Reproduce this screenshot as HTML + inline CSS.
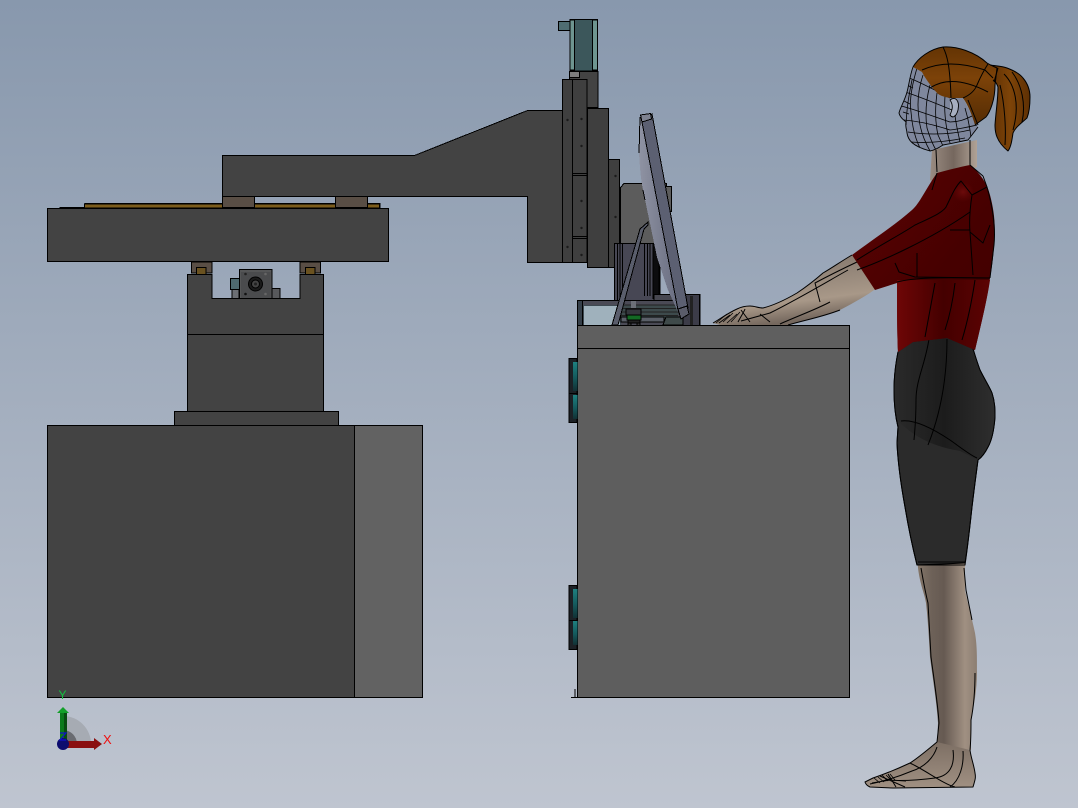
<!DOCTYPE html>
<html><head><meta charset="utf-8"><style>
html,body{margin:0;padding:0;width:1078px;height:808px;overflow:hidden;background:#a0abbb}
svg{display:block}
</style></head><body>
<svg width="1078" height="808" viewBox="0 0 1078 808" xmlns="http://www.w3.org/2000/svg" font-family="Liberation Sans, sans-serif">
<defs>
<linearGradient id="bg" x1="0" y1="0" x2="0" y2="1"><stop offset="0" stop-color="#8898ad"/><stop offset="1" stop-color="#bfc5d0"/></linearGradient>
<linearGradient id="mon" x1="0" y1="0" x2="1" y2="0"><stop offset="0" stop-color="#8f93a3"/><stop offset=".5" stop-color="#777b8d"/><stop offset="1" stop-color="#62667a"/></linearGradient>
<linearGradient id="teal" x1="0" y1="0" x2="0" y2="1"><stop offset="0" stop-color="#1e8080"/><stop offset=".55" stop-color="#14595c"/><stop offset="1" stop-color="#123034"/></linearGradient>
<linearGradient id="hair" x1="0" y1="0" x2="0" y2="1"><stop offset="0" stop-color="#643404"/><stop offset=".4" stop-color="#7c4208"/><stop offset="1" stop-color="#542c04"/></linearGradient>
<linearGradient id="tail" x1="0" y1="0" x2="1" y2="0"><stop offset="0" stop-color="#5e3004"/><stop offset=".5" stop-color="#7e4408"/><stop offset="1" stop-color="#5e3004"/></linearGradient>
<linearGradient id="red" x1="0" y1="0" x2="1" y2="1"><stop offset="0" stop-color="#5c0303"/><stop offset=".6" stop-color="#460000"/><stop offset="1" stop-color="#420000"/></linearGradient>
<linearGradient id="redT" x1="0" y1="0" x2="1" y2="0"><stop offset="0" stop-color="#6e0606"/><stop offset=".5" stop-color="#440000"/><stop offset="1" stop-color="#5c0303"/></linearGradient>
<linearGradient id="short" x1="0" y1="0" x2="1" y2="0"><stop offset="0" stop-color="#2a2a2a"/><stop offset=".5" stop-color="#1c1c1c"/><stop offset="1" stop-color="#2e2e2e"/></linearGradient>
<linearGradient id="leg" x1="0" y1="0" x2="1" y2="0"><stop offset="0" stop-color="#857769"/><stop offset=".25" stop-color="#6d6158"/><stop offset=".45" stop-color="#665a52"/><stop offset=".8" stop-color="#a09082"/><stop offset="1" stop-color="#8c7e72"/></linearGradient>
<linearGradient id="arm" x1="0" y1="0" x2="0.3" y2="1"><stop offset="0" stop-color="#7c6f65"/><stop offset=".45" stop-color="#95877a"/><stop offset=".75" stop-color="#a89888"/><stop offset="1" stop-color="#75685e"/></linearGradient>
<linearGradient id="neck" x1="0" y1="0" x2="1" y2="0"><stop offset="0" stop-color="#9a8c82"/><stop offset=".5" stop-color="#75675e"/><stop offset="1" stop-color="#b0a296"/></linearGradient>
<linearGradient id="foot" x1="0" y1="0" x2="0" y2="1"><stop offset="0" stop-color="#7d6f64"/><stop offset="1" stop-color="#a09082"/></linearGradient>
<radialGradient id="sh" cx=".5" cy=".5" r=".5"><stop offset="0" stop-color="#7a1010" stop-opacity=".7"/><stop offset="1" stop-color="#6a0505" stop-opacity="0"/></radialGradient>
<clipPath id="faceC"><path d="M913 67C910 75 909 85 907 92C905 100 900 108 899 113C900 118 904 120 906 122C905 127 907 130 907 133C908 140 912 146 930 151C936 150 940 147 943 145C955 143 962 141 968 140C972 135 975 131 978 127L963 98L937 93L922 72Z"/></clipPath>
</defs>
<rect width="1078" height="808" fill="url(#bg)"/>

<g stroke="#000" stroke-width="1" stroke-linejoin="miter" shape-rendering="crispEdges">
<rect x="47.500" y="425.500" width="307" height="272" fill="#434343"/>
<rect x="354.500" y="425.500" width="68" height="272" fill="#626262"/>
<rect x="174.500" y="411.500" width="164" height="14" fill="#434343"/>
<rect x="187.500" y="334.500" width="136" height="77" fill="#434343"/>
<rect x="191.500" y="262" width="20.500" height="11" fill="#594e45"/>
<rect x="300" y="262" width="20.500" height="11" fill="#594e45"/>
<path d="M187.500 334.500V274.500H212V298.500H300V274.500H323.500V334.500Z" fill="#434343"/>
<rect x="196.500" y="267.500" width="9.500" height="7" fill="#6a5220"/>
<rect x="305.500" y="267.500" width="9.500" height="7" fill="#6a5220"/>
<rect x="230.500" y="278.500" width="9" height="11" fill="#4f6a70"/>
<rect x="232" y="289.500" width="7" height="9" fill="#6c6f74"/>
<rect x="272" y="288.500" width="8" height="10" fill="#58595c"/>
<rect x="239.500" y="269.500" width="32.500" height="29" fill="#555657"/>
<rect x="241" y="272" width="29.500" height="26" fill="#4a4b4d" stroke="none"/>
</g>
<circle cx="255.500" cy="284" r="7" fill="#1a1a1a" stroke="#000"/>
<circle cx="255.500" cy="284" r="4" fill="#444" stroke="#000"/>
<circle cx="255.500" cy="284" r="1.500" fill="#222"/>
<circle cx="245.500" cy="274" r="1.300" fill="#222"/><circle cx="265.500" cy="274" r="1.300" fill="#666"/>
<circle cx="245.500" cy="294" r="1.300" fill="#111"/><circle cx="265.500" cy="294" r="1.300" fill="#666"/>
<g stroke="#000" stroke-width="1" shape-rendering="crispEdges">
<path d="M60 207.500H85V203.500H380V208H60Z" fill="#4b4b4b"/>
<rect x="84.500" y="204" width="295" height="4" fill="#7c5d1d"/>
<rect x="47.500" y="208.500" width="341" height="53" fill="#434343"/>
<rect x="222.500" y="196.500" width="32" height="11" fill="#594e45"/>
<rect x="335.500" y="196.500" width="32" height="11" fill="#594e45"/>
<path d="M222.500 155.500H414.500L527.500 110.500H563V262.500H527.500V196.500H222.500Z" fill="#434343"/>
<rect x="569.500" y="71.500" width="28.500" height="36" fill="#434343"/>
<rect x="569.500" y="71.500" width="10" height="6" fill="#7d7d7d"/>
<rect x="562.500" y="79.500" width="10" height="183" fill="#3f3f3f"/>
<rect x="572.500" y="79.500" width="14.500" height="183" fill="#3f3f3f"/>
<path d="M572.500 173.500H587M572.500 175.500H587M572.500 236.500H587M572.500 238.500H587" fill="none"/>
<rect x="608.500" y="159.500" width="11" height="108" fill="#3f3f3f"/>
<rect x="587.500" y="108.500" width="21" height="159" fill="#3f3f3f"/>
<rect x="558.500" y="21.500" width="12" height="9" fill="#4f6c72"/>
<rect x="570" y="19.500" width="27.500" height="51.500" fill="#3c575b"/>
<rect x="570" y="20" width="4.500" height="50" fill="#6e9590"/>
<rect x="592.500" y="20" width="5" height="50" fill="#6e9590"/>
<path d="M620.500 187.500L624 183.500H666.500V186.500H671.500V211.500H660V300H620.500Z" fill="#5c5c5c"/>
<rect x="614.500" y="243.500" width="43" height="57" fill="#474754"/>
<path d="M617.500 243.500V300M620 243.500V300M622.500 243.500V300M644.500 243.500V296M647.500 243.500V296M650 243.500V296" fill="none"/>
<rect x="653" y="243.500" width="6" height="55" fill="#0c0c0e"/>
<rect x="654" y="294.500" width="46" height="31" fill="#474750"/>
<rect x="577.500" y="300.500" width="100" height="25" fill="#4a4a55"/>
<rect x="583.500" y="305.500" width="37" height="20" fill="#9fb1bc" stroke="#3e4a52"/>
<rect x="577.500" y="300.500" width="5" height="25" fill="#36404a"/>
<rect x="620" y="305" width="58" height="14" fill="#3d4a4c" stroke="none"/>
<path d="M620 305H676M620 308.500H676M620 312H678M620 315.500H678" fill="none" stroke="#222"/>
<rect x="682" y="294.500" width="17.500" height="31" fill="#3c3c48"/>
<rect x="690" y="296" width="3" height="29" fill="#222" stroke="none"/>
<rect x="621" y="317" width="43" height="5" fill="#5a5f68"/>
<path d="M663 325L666 317H683V325Z" fill="#3f4a4a"/>
<rect x="631" y="301" width="5" height="7" fill="#6c7078" stroke="none"/>
<rect x="626" y="309" width="15" height="6" fill="#33363b"/>
<rect x="627" y="315" width="14" height="5" fill="#136a24"/>
<rect x="628" y="320" width="12" height="3" fill="#222"/>
<rect x="628" y="323" width="3" height="3" fill="#3a3a3a"/><rect x="637" y="323" width="3" height="3" fill="#3a3a3a"/>
<path d="M612 325L640 229L648 222L648 225L644 229L618 325Z" fill="#5a5e6c"/>
<path d="M640 117L639 153C640 170 641 180 643 190L657 257L668 290L678 312L688 308L652 114Z" fill="url(#mon)" stroke="none"/>
<path d="M640 117L639 153M643 190L645 200M652 114L688 308L678 312" fill="none"/>
<path d="M642 122L652 114L688 308L678 310Z" fill="#5c6072"/>
<path d="M640.500 115L650.500 113.500L651.500 119L642 122Z" fill="#7e8290"/>
<path d="M678 309L687 306L689 314L681 319Z" fill="#5a5c6a"/>
<rect x="577.500" y="348.500" width="272" height="349" fill="#5e5e5e"/>
<rect x="577.500" y="325.500" width="272" height="23" fill="#5f5f5f"/>
<path d="M569 358.500H577V422.500H569Z" fill="#1c2126"/>
<rect x="573" y="362" width="4.500" height="29" fill="url(#teal)" stroke="none"/>
<rect x="573" y="395" width="4.500" height="24" fill="url(#teal)" stroke="none"/>
<path d="M569 393.500H577" fill="none"/>
<path d="M569 585.500H577V649.500H569Z" fill="#1c2126"/>
<rect x="573" y="589" width="4.500" height="29" fill="url(#teal)" stroke="none"/>
<rect x="573" y="621" width="4.500" height="24" fill="url(#teal)" stroke="none"/>
<path d="M569 620.500H577" fill="none"/>
<path d="M571 697.500H578M575 697V689" fill="none"/>
</g>
<g fill="#1a1a1a">
<circle cx="567.500" cy="120" r="1.200"/><circle cx="581.500" cy="119" r="1.200"/><circle cx="581.500" cy="146" r="1.200"/><circle cx="581.500" cy="201" r="1.200"/><circle cx="581.500" cy="228" r="1.200"/><circle cx="581.500" cy="255" r="1.200"/><circle cx="567.500" cy="247" r="1.200"/><circle cx="615.500" cy="176" r="1.200"/><circle cx="615.500" cy="217" r="1.200"/>
</g>

<g stroke-linejoin="round">
<path d="M917 556L918 568C920 585 925 595 926 603C928 620 929 640 930 657C933 680 937 705 938 723L937 745L971 750C971 740 971 730 971 720C974 705 977 690 977 673C977 655 977 645 975 633C972 618 968 605 965 590L965 567L966 556Z" fill="url(#leg)"/>
<path d="M937 742C925 752 918 758 910 763C895 770 885 774 873 778L865 782C866 785 868 786 870 787L893 788L973 787C975 780 976 778 975 773C974 765 971 758 970 750Z" fill="url(#foot)"/>
<g fill="none" stroke="#000" stroke-width="1">
<path d="M921 568C924 585 926 595 928 603C929 620 930 640 931 657C934 680 938 705 939 723L937 742C925 752 918 758 910 763C895 770 885 774 873 778L865 782C866 785 868 786 870 787L893 788L973 787C975 780 976 778 975 773C974 765 971 758 970 750C971 740 971 730 971 720C974 705 975 690 975 673M964 568L966 590C968 600 970 610 972 620"/>
<path d="M937 747C934 757 925 767 912 771C900 776 885 781 870 784M953 750C955 765 950 776 935 778C920 780 900 781 885 780M963 751C964 765 960 780 950 787M910 763C925 770 945 785 955 787M880 776L905 787M888 774L896 787M872 783L890 780L906 781"/>
<path d="M874 778L880 783M878 777L884 782M882 775L888 781M886 775L891 780M890 774L895 780" stroke-width=".8"/>
</g>
<path d="M898 352C903 347 908 344 913 342C925 339 935 338 947 338C955 338 963 340 970 343C975 355 977 362 980 370C985 380 990 388 992 393C995 402 995 410 995 417C994 430 992 440 988 447C985 453 982 457 978 460C976 475 974 490 972 507C970 525 968 545 965 563L917 565C912 545 908 525 905 507C901 485 898 465 897 443L898 427C895 415 894 400 894 390C894 375 896 362 898 352Z" fill="#2b2b2b" stroke="#000" stroke-width="1"/>
<path d="M899 422C910 432 925 445 960 451L978 460C982 457 985 453 988 447C992 440 994 430 995 417C995 410 995 402 992 393C990 388 985 380 980 370C977 362 975 355 970 343C963 340 955 338 947 338C935 338 925 339 913 342C908 344 903 347 898 352C896 362 894 375 894 390C894 400 895 415 899 422Z" fill="url(#short)"/>
<g fill="none" stroke="#000" stroke-width="1">
<path d="M898 352C896 362 894 375 894 390C894 400 895 415 898 427L897 443C898 465 901 485 905 507C908 525 912 545 917 565H965C968 545 970 525 972 507C974 490 976 475 978 460C982 457 985 453 988 447C992 440 994 430 995 417C995 410 995 402 992 393C990 388 985 380 980 370C977 362 975 355 972 345"/>
<path d="M929 339C925 365 916 380 916 400C916 420 915 428 914 440M947 339C947 375 942 410 928 445M901 421C915 419 935 430 950 440C960 447 970 455 977 458"/>
<path d="M918 562H965"/>
</g>
<path d="M932 150L977 140L977 167L940 185L930 180Z" fill="url(#neck)"/>
<path d="M936 150L937 172M970 140L970 166" fill="none" stroke="#000" stroke-width="1"/>
<path d="M852 255C840 262 832 268 823 273C815 280 806 287 797 293C785 300 775 305 763 308C758 308 755 306 750 306C745 306 741 307 737 309C728 313 720 319 713 323L720 325L788 325C805 320 822 317 840 310C855 302 866 296 877 288Z" fill="url(#arm)"/>
<g fill="none" stroke="#000" stroke-width="1">
<path d="M852 255C840 262 832 268 823 273C815 280 806 287 797 293C785 300 775 305 763 308C758 308 755 306 750 306C745 306 741 307 737 309C728 313 720 319 713 323M788 325C805 320 822 317 840 310"/>
<path d="M857 262C840 270 828 276 815 283L820 302M848 270C830 280 800 298 770 313L741 321M780 324C795 317 815 310 830 302M738 322C741 316 744 312 745 309M770 322L760 314M750 322L741 310"/>
<path d="M716 323L727 314M719 323L730 315M723 322L733 313M727 323L737 314M731 322L740 312" stroke-width=".8"/>
</g>
<path d="M852 255C875 238 895 225 912 210C920 203 925 190 937 173C948 170 960 167 970 165C980 173 987 183 990 195C994 210 996 225 994 245C993 262 991 272 990 278C987 300 982 320 975 350L947 338L913 342L898 352C897 330 897 300 897 283L875 290Z" fill="url(#red)"/>
<path d="M897 280H990C987 300 982 320 975 350L947 338L913 342L898 352C897 330 897 300 897 280Z" fill="url(#redT)"/>
<ellipse cx="963" cy="192" rx="11" ry="10" fill="url(#sh)"/>
<g fill="none" stroke="#000" stroke-width="1">
<path d="M857 260C880 245 900 235 915 225C930 218 945 212 947 205C952 195 955 187 961 181L972 195L987 187M857 270C880 262 930 240 970 212M972 195C970 208 969 220 970 232L983 243L990 225M950 230H970M970 232L973 275M917 253L917 277M895 263L899 272L915 277L990 278M897 282C920 276 960 278 990 278M935 283C932 300 928 320 925 337M955 283C953 300 950 315 945 330M975 280C972 300 968 320 962 340M983 176L987 187C992 205 996 225 994 245L990 278M970 165L983 176M937 173L932 190"/>
</g>
<path d="M913 67C910 75 909 85 907 92C905 100 900 108 899 113C900 118 904 120 906 122C905 127 907 130 907 133C908 140 912 146 930 151C936 150 940 147 943 145C955 143 962 141 968 140C972 135 975 131 978 127L963 98L937 93L922 72Z" fill="#7f879d"/>
<path d="M950 100C955 96 960 100 958 110C956 118 952 118 950 115Z" fill="#a6aec0"/>
<g fill="none" stroke="#000" stroke-width=".8" clip-path="url(#faceC)">
<path d="M917 68C912 85 909 100 911 112C912 125 915 138 920 148M923 75C918 90 917 105 919 118C920 130 925 142 930 151M930 85C926 100 925 115 927 128C930 138 933 145 936 150M937 93C935 108 935 122 938 135L943 146M945 96C944 110 945 125 950 143M955 115C956 125 958 132 960 142M965 108C968 118 970 128 971 138M912 80C909 95 907 105 906 125"/>
<path d="M909 78C920 82 935 90 950 98M905 92C918 96 935 103 952 110M901 106C917 110 935 117 950 122C958 122 964 120 972 116M904 120C917 121 935 125 950 130C960 129 968 127 977 125M908 132C920 134 945 136 970 130M911 142C925 143 945 142 965 138M903 112L909 114M902 100L910 104M907 85L913 88"/>
</g>
<g fill="none" stroke="#000" stroke-width=".9">
<path d="M913 67C910 75 909 85 907 92C905 100 900 108 899 113C900 118 904 120 906 122C905 127 907 130 907 133C908 140 912 146 930 151C936 150 940 147 943 145C955 143 962 141 968 140C972 135 975 131 978 127"/>
<path d="M950 100C955 96 960 100 958 110C956 118 952 118 950 115C952 110 954 106 950 100Z"/>
</g>
<path d="M990 65C996 66 1002 66 1007 68C1015 71 1020 74 1023 78C1028 84 1030 90 1030 97C1030 107 1029 113 1027 118C1020 124 1015 128 1013 133C1012 140 1011 147 1008 151C1003 147 999 142 997 137C995 132 995 128 995 125C996 110 998 100 998 87C997 84 995 81 993 80Z" fill="url(#tail)"/>
<path d="M913 67C918 58 930 49 943 47C957 46 975 52 987 63C992 66 995 67 997 68L995 85C995 100 990 112 986 117L975 125C972 115 968 105 963 98C958 98 955 98 950 98C945 97 940 96 937 93C930 85 925 78 922 72Z" fill="url(#hair)"/>
<g fill="none" stroke="#000" stroke-width="1">
<path d="M913 67C918 58 930 49 943 47C957 46 975 52 987 63C992 66 995 67 997 68L995 85C995 100 990 112 986 117L975 125"/>
<path d="M943 47C947 55 950 65 951 98M922 70C940 62 960 62 985 70L993 78M930 88C945 78 965 80 988 92M963 98C970 95 975 90 977 85C980 78 984 70 988 64M968 100L978 125"/>
<path d="M990 65C996 66 1002 66 1007 68C1015 71 1020 74 1023 78C1028 84 1030 90 1030 97C1030 107 1029 113 1027 118C1020 124 1015 128 1013 133C1012 140 1011 147 1008 151C1003 147 999 142 997 137C995 132 995 128 995 125C996 110 998 100 998 87C997 84 995 81 993 80M998 68L994 82M1004 74C1015 85 1020 105 1013 130M1012 72C1022 85 1026 105 1022 122M1000 85C1005 105 1006 130 1005 145"/>
</g>
</g>

<path d="M63 744V716A28 28 0 0 1 91 744Z" fill="#a6abb3"/>
<path d="M63 744V730A14 14 0 0 1 77 744Z" fill="#696b70"/>
<rect x="60" y="713" width="7" height="31" fill="#0b7a1b"/>
<rect x="64" y="713" width="3" height="31" fill="#084d10"/>
<path d="M57 713L63 707L69 713Z" fill="#14a02a"/>
<rect x="66" y="741" width="28" height="7" fill="#8a0f10"/>
<path d="M94 738L102 744L94 750Z" fill="#8a0f10"/>
<circle cx="63" cy="744" r="6" fill="#0c0c6e"/>
<path d="M60 733H66L60 740H66" fill="none" stroke="#1111cc" stroke-width="1.200"/>
<text x="58.500" y="699" font-size="12" fill="#12c040">Y</text>
<text x="103" y="744" font-size="13" fill="#ee1010">X</text>
</svg>
</body></html>
